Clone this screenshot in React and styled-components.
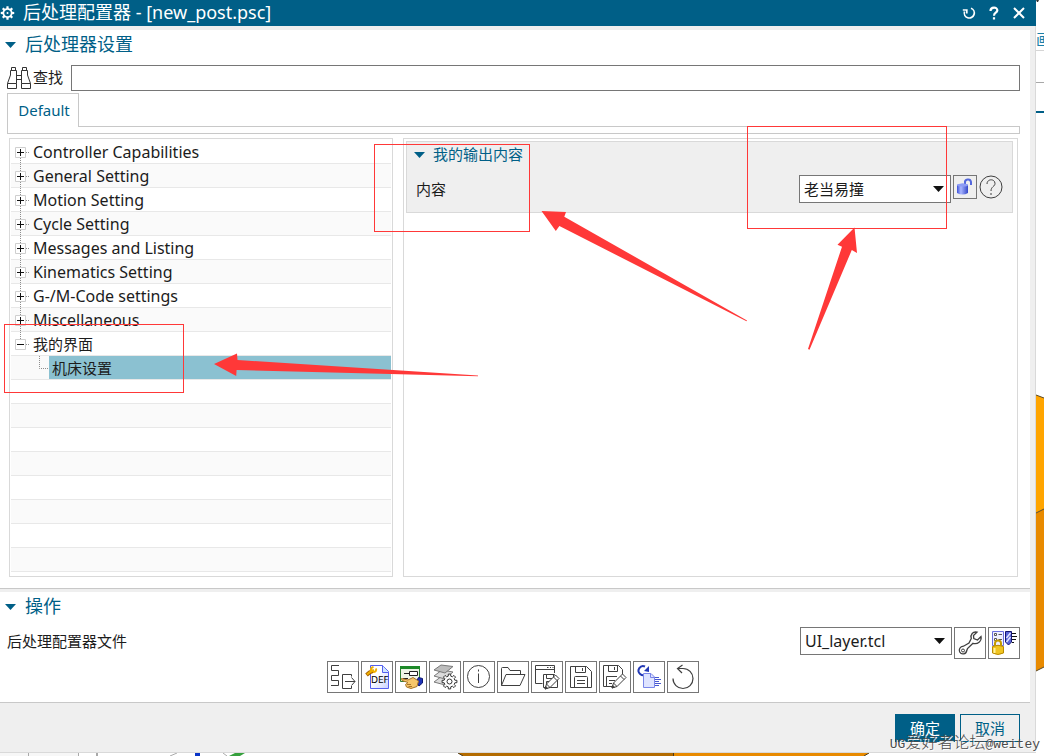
import React from "react";
import styled, { createGlobalStyle, css } from "styled-components";

const c = {
  brand: "#005f87",
  grey: "#efefef",
  line: "#c8c8c8",
  soft: "#d9d9d9",
  edge: "#767676",
  ink: "#1c1c1c",
  selected: "#8bc1d1",
  mark: "#ff3838",
};

const GlobalStyle = createGlobalStyle`
  *, *::before, *::after { box-sizing: border-box; }
  body {
    margin: 0;
    background: #fff;
    color: ${c.ink};
    font: 15px/20px "Noto Sans", "Noto Sans CJK SC", sans-serif;
  }
  button, input, select { font: inherit; color: inherit; margin: 0; }
  svg { display: block; flex: none; }
`;

/* ---------- page and window frame ---------- */

const Page = styled.div`
  position: relative;
  display: grid;
  grid-template-columns: minmax(0, 1fr) 8px;
  grid-template-rows: auto minmax(3px, 1fr);
  min-height: 100vh;
  overflow: hidden;
`;

const Dialog = styled.main`
  background: ${c.grey};
  border-right: 1px solid ${c.soft};
  border-bottom: 1px solid ${c.soft};
`;

const TitleBar = styled.header`
  display: flex;
  align-items: center;
  height: 26px;
  margin: 0 -1px 4px 0;
  padding-right: 7px;
  background: ${c.brand};
  color: #fff;
`;

const WindowTitle = styled.h1`
  flex: 1;
  margin: 0 0 0 8px;
  font-size: 18px;
  line-height: 24px;
  padding-bottom: 2px;
  font-weight: 400;
`;

const TitleActions = styled.div`
  display: flex;
  gap: 5px;
`;

const TitleButton = styled.button`
  display: grid;
  place-items: center;
  width: 20px;
  height: 20px;
  padding: 0;
  border: 0;
  background: none;
`;

const Section = styled.section`
  margin-right: 5px;
  background: #fff;
  border-bottom: 1px solid ${c.line};
  & + & { margin-top: 3px; }
`;

const SectionHeading = styled.h2`
  margin: 0;
  color: ${c.brand};
  font-weight: 400;
`;

const Toggle = styled.button`
  display: flex;
  align-items: center;
  gap: ${(p) => (p.$small ? 7 : 8)}px;
  height: ${(p) => (p.$small ? 26 : 30)}px;
  padding: 0 0 0 ${(p) => (p.$small ? 7 : 5)}px;
  border: 0;
  background: none;
  font-size: ${(p) => (p.$small ? 15 : 18)}px;
`;

const ToggleText = styled.span`
  padding-bottom: 2px;
`;

/* ---------- search and tabs ---------- */

const SearchRow = styled.div`
  display: flex;
  align-items: center;
  gap: 8px;
  margin: 5px 10px 2px 7px;
`;

const SearchLabel = styled.label`
  display: flex;
  align-items: center;
  gap: 2px;
`;

const SearchInput = styled.input`
  flex: 1;
  min-width: 0;
  height: 26px;
  padding: 0 6px;
  border: 1px solid ${c.edge};
  background: #fff;
`;

const TabRow = styled.div`
  display: flex;
  margin: 0 10px 0 7px;
`;

const Tab = styled.button`
  width: 72px;
  height: 34px;
  padding: 0 0 2px 2px;
  border: 1px solid ${c.line};
  border-bottom: 0;
  background: #fff;
  color: ${c.brand};
`;

const TabFiller = styled.div`
  flex: 1;
  border-bottom: 1px solid ${c.line};
`;

const TabEdge = styled.div`
  height: 7px;
  margin: 0 10px 4px 7px;
  border: 1px solid ${c.line};
  border-top: 0;
`;

/* ---------- tree and detail panels ---------- */

const Panels = styled.div`
  display: grid;
  grid-template-columns: 384px minmax(0, 1fr);
  gap: 10px;
  padding: 0 12px 11px 9px;
`;

const Panel = styled.div`
  border: 1px solid ${c.soft};
`;

const TreePanel = styled(Panel)`
  padding: 1px 1px 4px;
`;

const DetailPanel = styled(Panel)`
  padding: 2px 4px 2px 2px;
`;

const Tree = styled.ul`
  margin: 0;
  padding: 0;
  list-style: none;
`;

const TreeRow = styled.li`
  display: flex;
  height: 24px;
  border-bottom: 1px solid #e8e8e8;
  &:nth-child(even) { background: #fafafa; }
`;

const TreeItem = styled.button`
  flex: 1;
  padding: 1px 0 0 ${(p) => (p.$selected ? 3 : 0)}px;
  border: 0;
  background: ${(p) => (p.$selected ? c.selected : "none")};
  font-size: ${(p) => (p.$latin ? 16 : 15)}px;
  line-height: 22px;
  text-align: left;
`;

const Group = styled.section`
  border: 1px solid ${c.soft};
  background: ${c.grey};
`;

const FieldRow = styled.div`
  display: flex;
  align-items: flex-start;
  gap: 2px;
  ${(p) =>
    p.$inGroup
      ? css`padding: 7px 9px 9px 9px;`
      : css`padding: 5px 10px 2px 7px;`}
`;

const FieldLabel = styled.label`
  flex: 1;
  line-height: 28px;
`;

const SelectBox = styled.div`
  display: grid;
  align-items: center;
  width: 152px;
  & > * { grid-area: 1 / 1; }
  & > svg { justify-self: end; margin-right: 6px; pointer-events: none; }
`;

const Select = styled.select`
  appearance: none;
  width: 100%;
  height: 28px;
  padding: 0 20px 0 4px;
  border: 1px solid ${c.edge};
  border-radius: 0;
  background: #fff;
  font-size: ${(p) => (p.$latin ? 16 : 15)}px;
`;

const IconButton = styled.button`
  display: grid;
  place-items: center;
  width: ${(p) => (p.$small ? 24 : 32)}px;
  height: ${(p) => (p.$small ? 24 : 32)}px;
  padding: 0;
  border: ${(p) => (p.$bare ? 0 : 1)}px solid ${c.edge};
  background: ${(p) => (p.$small ? "none" : "#fff")};
`;

const Toolbar = styled.div`
  display: flex;
  justify-content: center;
  gap: 2px;
  padding: 0 10px 9px 6px;
`;

const Footer = styled.footer`
  display: flex;
  justify-content: flex-end;
  gap: 5px;
  padding: 11px 15px 10px;
`;

const DialogButton = styled.button`
  width: 60px;
  height: 28px;
  padding: 0;
  border: 1px solid ${c.brand};
  background: ${(p) => (p.$primary ? c.brand : c.grey)};
  color: ${(p) => (p.$primary ? "#fff" : c.brand)};
`;

/* ---------- what shows behind the window, and what lies over it ---------- */

const SideStrip = styled.aside`
  grid-row: 1 / 3;
  grid-column: 2;
  overflow: hidden;
  display: grid;
  align-content: start;
  & > * { grid-area: 1 / 1; }
`;

const BehindLabel = styled.span`
  display: flex;
  justify-content: flex-end;
  padding-top: 29px;
  color: #1b7fa8;
`;

const BottomStrip = styled.div`
  overflow: hidden;
  height: 3px;
`;

const Annotations = styled.svg`
  position: absolute;
  top: 0;
  left: 0;
  pointer-events: none;
`;

const Watermark = styled.div`
  position: absolute;
  right: 4px;
  bottom: 1px;
  color: #4a4a4a;
  font: 13px/20px "Liberation Mono", monospace;
  text-shadow: 1px 1px 0 #fff;
  pointer-events: none;
`;

const WatermarkHan = styled.span`
  font: 300 16px/20px "Noto Sans CJK SC", sans-serif;
`;

/* ---------- icons ---------- */

const Icon = ({ size = 30, children, ...rest }) => (
  <svg width={size} height={size} viewBox={`0 0 ${size} ${size}`} fill="none" stroke="#3f3f3f" aria-hidden="true" {...rest}>
    {children}
  </svg>
);

const Caret = ({ color = c.brand }) => (
  <svg width="12" height="6" viewBox="0 0 12 6" aria-hidden="true">
    <path d="M0 0H11L5.500 6Z" fill={color} />
  </svg>
);

const gearPath = (cx, cy, outer, inner, teeth) => {
  const pts = [];
  for (let i = 0; i < teeth; i++) {
    [[-0.3, inner], [-0.2, outer], [0.2, outer], [0.3, inner]].forEach(([o, r]) => {
      const a = ((i + o) / teeth) * Math.PI * 2;
      pts.push(`${(cx + Math.sin(a) * r).toFixed(2)} ${(cy - Math.cos(a) * r).toFixed(2)}`);
    });
  }
  return `M${pts.join("L")}Z`;
};

const TitleGear = () => (
  <Icon size={15} stroke="none">
    <path fill="#fff" fillRule="evenodd" d={`${gearPath(7.5, 7, 6.8, 5, 8)}M7.500 3.700a3.300 3.300 0 1 0 .01 0Z`} />
    <circle cx="7.500" cy="7" r="1" fill="#fff" />
  </Icon>
);

const Binoculars = () => (
  <Icon size={24} stroke="#333">
    <path d="M.5 17.500H9.500V22.500H.5ZM14.500 17.500H23.500V22.500H14.500ZM.5 17.500L3.500 9V4.500H9.500V17.500M23.500 17.500L20.500 9V4.500H14.500V17.500M4.500 4.500V1.500H8.500V4.500M15.500 4.500V1.500H19.500V4.500M9.500 9.500H14.500M9.500 13.500H14.500" />
  </Icon>
);

const Unlock = () => (
  <Icon size={22} stroke="none">
    <defs>
      <linearGradient id="lockBody">
        <stop offset="0" stopColor="#3c50d8" />
        <stop offset=".35" stopColor="#a9b6ff" />
        <stop offset="1" stopColor="#3346c8" />
      </linearGradient>
    </defs>
    <path d="M11 9V7A3 3 0 0 1 17 6V9" fill="none" stroke="#5468dd" strokeWidth="2" />
    <path d="M3 9Q8.500 6 14 9V17Q8.500 20 3 17Z" fill="url(#lockBody)" />
    <ellipse cx="8.500" cy="9" rx="5.500" ry="1.500" fill="#8d9cf5" />
  </Icon>
);

const HelpCircle = () => (
  <Icon size={24}>
    <circle cx="12" cy="12" r="11" />
    <path d="M8 9C8 3.500 16 3.500 16 8.500C16 11.500 12 11.500 12 16M12 18V20" />
  </Icon>
);

const WrenchOutline = () => (
  <Icon>
    <path strokeWidth="1.300" d="M22 4.200C18 3.200 15 6.500 16.300 10.500L14 15L8.500 18.200C5 18.500 3.500 21.500 4.700 24C6.500 27 11 26.500 11.800 22.500L12.500 20.500L18 15.300C22.500 16.500 27 13.500 26 8.500L22.500 12L18.800 10.500L18.500 7.500Z" />
    <circle cx="8" cy="22.500" r="1.500" />
  </Icon>
);

const LockedTool = () => (
  <Icon stroke="none">
    <path d="M3.500 3.500H14.500V17.500H3.500Z" fill="#eef0ff" stroke="#6a70dc" />
    <path d="M5.500 5.500H7.500V7.500H5.500ZM5.500 10.500H7.500V12.500H5.500Z" fill="#fff" stroke="#555" />
    <path d="M9.500 6.500H13M9.500 11.500H13" stroke="#555" />
    <path d="M16.500 3.500H22.500V14L19.500 17L16.500 14Z" fill="#5966d8" stroke="#141472" />
    <path d="M17.500 10L21.500 5M17.500 14L21.500 9" stroke="#dfe3ff" strokeWidth="1.500" />
    <path d="M23 5.500H27M23 8.500H28M23 11.500H27M23 14.500H25" stroke="#111" />
    <path d="M6 18V15.500Q6 12.500 9 12.500Q12 12.500 12 15.500V18" stroke="#c39a00" strokeWidth="2" />
    <path d="M3.500 18.500Q9 16 14.500 18.500V25Q9 28 3.500 25Z" fill="#f0c420" stroke="#b98a00" />
    <path d="M5.500 20V25" stroke="#fff29a" strokeWidth="2" />
  </Icon>
);

const FloppyBody = () => (
  <>
    <path d="M4.500 4.500H20.500L25.500 9.500V25.500H4.500Z" />
    <path d="M9.500 4.500V10.500H19.500V4.500M16.500 6V9M8.500 25.500V15.500Q8.500 14.500 9.500 14.500H20.500Q21.500 14.500 21.500 15.500V25.500M11 18.500H19M11 21.500H19" />
  </>
);

const Pencil = ({ x, y }) => (
  <g transform={`translate(${x} ${y})`} fill="#fff">
    <path d="M0 14L1.500 9L10.500 0L14 3.500L5 12.500ZM1.500 9L5 12.500M8.500 2L12 5.500" />
    <path d="M0 14L.7 11.500L2.500 13.200Z" fill="#333" />
  </g>
);

const tools = [
  {
    label: "导出",
    art: <path d="M11 3.500H3.500V8.500H10.500V13.500H3.500V18.500H10.500V23.500H3M23.500 14.500V12.500H14.500V26.500H23.500V24M17 19.500H27M23.500 15.500L27 19.500L23.500 23.500" />,
  },
  {
    label: "DEF 文件",
    art: (
      <>
        <defs>
          <linearGradient id="page" x2="1" y2="1">
            <stop offset=".4" stopColor="#fff" />
            <stop offset="1" stopColor="#c9d2ff" />
          </linearGradient>
        </defs>
        <path d="M8.500 3.500H20.500L26.500 9.500V26.500H8.500Z" fill="url(#page)" stroke="#5560ee" />
        <path d="M20.500 3.500V10.500H26.500" fill="#cfe6ff" stroke="#5560ee" />
        <path d="M4.500 13L7.500 10.500L11 9" stroke="#a86400" strokeWidth="4" />
        <path d="M5 12.500L8 10L12 8M9.500 9.500Q7.500 6 11.500 5M11 10Q15 10 14 6.500" stroke="#f0b000" strokeWidth="2" />
        <text x="9" y="21" fill="#000" stroke="none" fontFamily="DejaVu Sans, sans-serif" fontSize="9">DEF</text>
      </>
    ),
  },
  {
    label: "界面",
    art: (
      <>
        <path d="M4.500 4.500H23.500V19.500H4.500Z" fill="#eef6e8" stroke="#2d7d32" />
        <path d="M4 4H24V7H4Z" fill="#1e8a2a" stroke="none" />
        <path d="M8 11.500H13M13.500 9.500H21.500V13.500H13.500Z" fill="#fff" stroke="#222" />
        <path d="M7 16.500H12" stroke="#222" />
        <path d="M20 20L22.500 15.500L26.500 16.500V21L23 24Z" fill="#1f33b8" stroke="#0c1870" />
        <path d="M5.500 16.500L12 18L17 15.500L22.500 19L21 24.500L15 26.500L10.500 25L9.500 22.500L12 20.500L6 18.500Z" fill="#f6c66b" stroke="#a87428" />
        <path d="M11 22.500H15M12.500 24.500H16" stroke="#a87428" />
      </>
    ),
  },
  {
    label: "层设置",
    art: (
      <>
        <g fill="#dcdcdc" stroke="#7a7a7a">
          <path d="M4 20L12 14L23 16L15 23Z" />
          <path d="M4 14L12 8L23 10L15 17Z" />
          <path d="M4 8L11 3L23 4.500L15 11Z" fill="#bdbdbd" />
        </g>
        <path d={gearPath(19.5, 19.5, 7.5, 5.5, 8)} fill="#fff" stroke="#333" />
        <circle cx="19.500" cy="19.500" r="2.500" stroke="#333" />
      </>
    ),
  },
  {
    label: "信息",
    art: (
      <>
        <circle cx="14.500" cy="14.500" r="11" />
        <path d="M14.500 11.500V21M14.500 7.500V9.500" />
      </>
    ),
  },
  { label: "打开", art: <path d="M3.500 23.500V6.500Q3.500 5.500 4.500 5.500H10L12 8.500H22.500V12M3.500 23.500L8 12.500H27L22 23.500Z" /> },
  {
    label: "窗口另存",
    art: (
      <>
        <path d="M10.500 21.500H3.500V3.500H22.500V11M3.500 7.500H22.500M15 5.500H16.500M18 5.500H19M20.500 5.500H21.500" />
        <path d="M11.500 12.500H22.500L25.500 15.500V25.500H11.500ZM14.500 12.500V16.500H21.500V12.500M14.500 25.500V19.500H21.500" />
        <Pencil x={13} y={13} />
      </>
    ),
  },
  { label: "保存", art: <FloppyBody /> },
  {
    label: "另存为",
    art: (
      <>
        <path d="M13 24.500H3.500V3.500H18.500L22.500 7.500V12M8.500 3.500V9.500H17.500V3.500M14.500 5V8M6.500 24.500V14.500H17M9 18.500H15M9 21.500H12" />
        <Pencil x={12} y={12} />
      </>
    ),
  },
  {
    label: "重新加载",
    art: (
      <>
        <path d="M11 4.500A4.500 4.500 0 1 0 12 12" stroke="#2339b5" strokeWidth="2" />
        <path d="M10 9L15 4V10Z" fill="#2339b5" stroke="none" />
        <path d="M9.500 11.500H17L20.500 15V25.500H9.500Z" fill="#dfe4ff" stroke="#7a86e8" />
        <path d="M16.500 11.500V15.500H20.500" stroke="#7a86e8" />
        <path d="M21 15.500H25M21 17.500H27M21 19.500H25M21 21.500H27M21 23.500H25" stroke="#4658cf" />
      </>
    ),
  },
  { label: "重置", art: <path strokeWidth="1.200" d="M5 16.500A10 10 0 1 0 15 6.500H9.500M14.500 3L9.500 6.500L14 11" /> },
];

const Expander = ({ open, first, last }) => (
  <svg width="22" height="23" viewBox="0 0 22 23" fill="none" stroke="#8e8e8e" aria-hidden="true">
    <path strokeDasharray="1 1" d={`M9.500 ${first ? 12 : 0}V${last ? 12 : 23}M15 12.500H19`} />
    <path fill="#fff" stroke="#cfcfcf" d="M4.500 7.500H14.500V17.500H4.500Z" />
    <path stroke="#111" d={open ? "M6 12.500H13" : "M6 12.500H13M9.500 9V16"} />
  </svg>
);

const ChildLine = () => (
  <svg width="38" height="23" viewBox="0 0 38 23" fill="none" stroke="#8e8e8e" aria-hidden="true">
    <path strokeDasharray="1 1" d="M28.500 0V12.500H38" />
  </svg>
);

/* ---------- data ---------- */

const branches = [
  "Controller Capabilities",
  "General Setting",
  "Motion Setting",
  "Cycle Setting",
  "Messages and Listing",
  "Kinematics Setting",
  "G-/M-Code settings",
  "Miscellaneous",
  "我的界面",
];
const emptyRows = 8;

const isLatin = (text) => /^[ -~]+$/.test(text);

const Dropdown = ({ id, value }) => (
  <SelectBox>
    <Select id={id} defaultValue={value} $latin={isLatin(value)}>
      <option>{value}</option>
    </Select>
    <Caret color="#111" />
  </SelectBox>
);

export default function App() {
  return (
    <Page>
      <GlobalStyle />
      <Dialog>
        <TitleBar>
          <TitleGear />
          <WindowTitle>后处理配置器 - [new_post.psc]</WindowTitle>
          <TitleActions>
            <TitleButton aria-label="重置">
              <Icon size={14} stroke="#fff" strokeWidth="1.700"><path d="M2.500 5.500A5 5 0 1 0 9 2.300M.8 4H4.800V7.500" /></Icon>
            </TitleButton>
            <TitleButton aria-label="帮助">
              <Icon size={14} stroke="#fff" strokeWidth="2.200"><path d="M3.500 5C3.500 .5 10.500 .5 10.300 4.500C10 7 7 6.500 7 9.800M7 11.200V13.500" /></Icon>
            </TitleButton>
            <TitleButton aria-label="关闭">
              <Icon size={14} stroke="#fff" strokeWidth="2"><path d="M2 2L12 12M12 2L2 12" /></Icon>
            </TitleButton>
          </TitleActions>
        </TitleBar>

        <Section>
          <SectionHeading>
            <Toggle aria-expanded="true"><Caret /><ToggleText>后处理器设置</ToggleText></Toggle>
          </SectionHeading>
          <SearchRow>
            <SearchLabel htmlFor="search"><Binoculars /><ToggleText>查找</ToggleText></SearchLabel>
            <SearchInput id="search" type="text" />
          </SearchRow>
          <TabRow role="tablist">
            <Tab role="tab" aria-selected="true">Default</Tab>
            <TabFiller />
          </TabRow>
          <TabEdge />
          <Panels>
            <TreePanel>
              <Tree>
                {branches.map((name, i) => (
                  <TreeRow key={name}>
                    <Expander open={i === branches.length - 1} first={i === 0} last={i === branches.length - 1} />
                    <TreeItem $latin={isLatin(name)}>{name}</TreeItem>
                  </TreeRow>
                ))}
                <TreeRow>
                  <ChildLine />
                  <TreeItem $selected>机床设置</TreeItem>
                </TreeRow>
                {Array.from({ length: emptyRows }, (_, i) => <TreeRow key={i} aria-hidden="true" />)}
              </Tree>
            </TreePanel>
            <DetailPanel>
              <Group>
                <SectionHeading as="h3">
                  <Toggle $small aria-expanded="true"><Caret /><ToggleText>我的输出内容</ToggleText></Toggle>
                </SectionHeading>
                <FieldRow $inGroup>
                  <FieldLabel htmlFor="content">内容</FieldLabel>
                  <Dropdown id="content" value="老当易撞" />
                  <IconButton $small aria-label="解锁"><Unlock /></IconButton>
                  <IconButton $small $bare aria-label="帮助"><HelpCircle /></IconButton>
                </FieldRow>
              </Group>
            </DetailPanel>
          </Panels>
        </Section>

        <Section>
          <SectionHeading>
            <Toggle aria-expanded="true"><Caret /><ToggleText>操作</ToggleText></Toggle>
          </SectionHeading>
          <FieldRow>
            <FieldLabel htmlFor="file">后处理配置器文件</FieldLabel>
            <Dropdown id="file" value="UI_layer.tcl" />
            <IconButton aria-label="编辑"><WrenchOutline /></IconButton>
            <IconButton aria-label="锁定刀具"><LockedTool /></IconButton>
          </FieldRow>
          <Toolbar role="toolbar">
            {tools.map((tool) => (
              <IconButton key={tool.label} aria-label={tool.label}><Icon>{tool.art}</Icon></IconButton>
            ))}
          </Toolbar>
        </Section>

        <Footer>
          <DialogButton $primary>确定</DialogButton>
          <DialogButton>取消</DialogButton>
        </Footer>
      </Dialog>

      <SideStrip>
        <svg width="8" height="756" viewBox="0 0 8 756" aria-hidden="true">
          <path d="M0 0H3L2 2H1Z" fill="#333" />
          <path d="M0 50H8V51H0Z" fill="#d5d5d5" />
          <path d="M0 82H8V83H0Z" fill="#a8a8a8" />
          <path d="M0 111H8V113H0Z" fill={c.brand} />
          <path d="M0 395L8 398V509L0 513Z" fill="#ffa500" />
          <path d="M0 513L8 509V667L0 671Z" fill="#e88a00" />
          <path d="M0 395L8 398M0 513L8 509M0 671L8 667" stroke="#5a4a2a" />
        </svg>
        <BehindLabel>画</BehindLabel>
      </SideStrip>
      <BottomStrip>
        <svg width="1036" height="3" viewBox="0 0 1036 3" aria-hidden="true">
          <path d="M0 0H78V3H0Z" fill="#f7f7f7" />
          <path d="M28 0H29V3H28ZM78 0H79V3H78ZM96 0H98V3H96Z" fill="#a9a9a9" />
          <path d="M170 3L177 0M223 0L227 3" stroke="#aaa" />
          <path d="M195 0H200V3H195Z" fill="#0a35c8" />
          <path d="M229 3L235 0H245L240 3Z" fill="#35a03c" />
          <path d="M458 0H674V3H463Z" fill="#b36b00" />
          <path d="M674 0H869L864 3H674Z" fill="#e88a00" />
          <path d="M458 0L463 3M869 0L864 3M673.500 0V3" stroke="#4a3a1a" />
        </svg>
      </BottomStrip>

      <Annotations width="1044" height="756" viewBox="0 0 1044 756" aria-hidden="true">
        <g fill="none" stroke={c.mark}>
          <rect x="374.500" y="144.500" width="155" height="87" />
          <rect x="747.500" y="126.500" width="199" height="102" />
          <rect x="4.500" y="324.500" width="179" height="68" />
        </g>
        <g fill={c.mark}>
          <path d="M541.500 211L566 212L564.300 216.700L747 320.500L746.500 321.300L559.400 226L555.800 231Z" />
          <path d="M214 364L237 353.500L237.500 360L478 375.500V376.200L236.600 370L236.200 376Z" />
          <path d="M854.500 227.500L857 253L851.800 250L809.500 349.700L808 349L842 246.700L837.500 244.700Z" />
        </g>
      </Annotations>
      <Watermark>UG<WatermarkHan>爱好者论坛</WatermarkHan>@weitey</Watermark>
    </Page>
  );
}
